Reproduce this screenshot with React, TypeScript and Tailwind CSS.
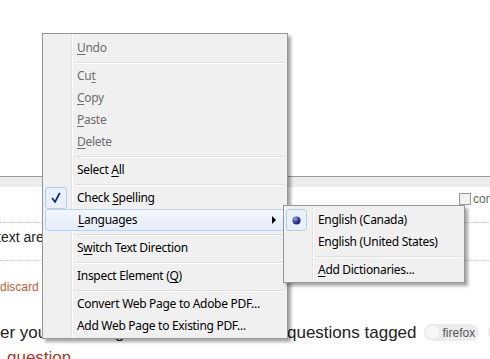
import React from "react";

type Entry =
  | { sep: true }
  | {
      sep?: false;
      label: React.ReactNode;
      disabled?: boolean;
      checked?: boolean;
      radio?: boolean;
      active?: boolean;
      arrow?: boolean;
    };

function U({ children }: { children: React.ReactNode }) {
  return <span className="underline underline-offset-[2px]">{children}</span>;
}

const mainItems: Entry[] = [
  { label: <><U>U</U>ndo</>, disabled: true },
  { sep: true },
  { label: <>Cu<U>t</U></>, disabled: true },
  { label: <><U>C</U>opy</>, disabled: true },
  { label: <><U>P</U>aste</>, disabled: true },
  { label: <><U>D</U>elete</>, disabled: true },
  { sep: true },
  { label: <>Select <U>A</U>ll</> },
  { sep: true },
  { label: <>Check <U>S</U>pelling</>, checked: true },
  { label: <><U>L</U>anguages</>, active: true, arrow: true },
  { sep: true },
  { label: <>S<U>w</U>itch Text Direction</> },
  { sep: true },
  { label: <>Inspect Element (<U>Q</U>)</> },
  { sep: true },
  { label: <>Convert Web Page to Adobe PDF...</> },
  { label: <>Add Web Page to Existing PDF...</> },
];

const subItems: Entry[] = [
  { label: <>English (Canada)</>, radio: true },
  { label: <>English (United States)</> },
  { sep: true },
  { label: <><U>A</U>dd Dictionaries...</> },
];

function CheckBox() {
  return (
    <div className="absolute left-0 top-0 h-[22px] w-[22px] rounded-[3px] border border-[#b4cdea] bg-[#e8f0fa]">
      <svg width="20" height="20" viewBox="0 0 20 20">
        <path d="M6.5 10.5 L9 14 L13.5 5.5" fill="none" stroke="#17297a" strokeWidth="1.7" strokeLinecap="round" strokeLinejoin="round" />
      </svg>
    </div>
  );
}

function RadioBox() {
  return (
    <div className="absolute left-0 top-0 flex h-[22px] w-[21px] items-center justify-center rounded-[3px] border border-[#b4cdea] bg-[#e8f0fa]">
      <svg width="9" height="9" viewBox="0 0 9 9">
        <defs>
          <radialGradient id="dot" cx="35%" cy="30%" r="70%">
            <stop offset="0%" stopColor="#9aa4e6" />
            <stop offset="55%" stopColor="#3a45a0" />
            <stop offset="100%" stopColor="#1c2366" />
          </radialGradient>
        </defs>
        <circle cx="4.5" cy="4.5" r="4" fill="url(#dot)" />
      </svg>
    </div>
  );
}

function Menu({ items, className }: { items: Entry[]; className: string }) {
  return (
    <div
      className={`absolute border border-[#979797] bg-[#f0f0f0] px-[2px] pt-[3px] pb-[1px] text-[12px] tracking-[-0.3px] shadow-[3px_3px_3px_rgba(0,0,0,0.35)] ${className}`}
      style={{ fontFamily: '"Noto Sans", "Open Sans", sans-serif' }}
    >
      <div className="absolute top-0 bottom-0 left-[28px] w-[2px] border-l border-[#e2e3e3] bg-white" />
      {items.map((it, i) =>
        it.sep ? (
          <div key={i} className="relative h-[6px] pl-[30px] pt-[3px]">
            <div className="h-[2px] border-t border-b border-t-[#e0e0e0] border-b-white" />
          </div>
        ) : (
          <div
            key={i}
            className={`relative flex h-[22px] items-center pl-[32px] leading-none ${
              it.disabled ? "text-[#6d6d6d]" : "text-[#000]"
            } ${it.active ? "rounded-[3px] border border-[#b8d3f3] bg-linear-to-b from-[#f3f7fd] to-[#e4edfa] pl-[31px]" : ""}`}
          >
            {it.checked && <CheckBox />}
            {it.radio && <RadioBox />}
            <span className="whitespace-nowrap">{it.label}</span>
            {it.arrow && (
              <svg className="absolute right-[8px] top-[6px]" width="4" height="8" viewBox="0 0 4 8">
                <path d="M0 0 L4 4 L0 8 Z" fill="#000" />
              </svg>
            )}
          </div>
        )
      )}
    </div>
  );
}

export default function App() {
  return (
    <div
      className="relative h-[359px] w-[490px] overflow-hidden bg-white text-[#222]"
      style={{ fontFamily: '"Liberation Sans", Arial, sans-serif' }}
    >
      {/* page behind the menu */}
      <div className="h-[176px]" />
      <div className="h-[11px] border-t border-[#9a9a9a] bg-[#ececec]" />
      <div className="flex h-[35px] items-start whitespace-nowrap pl-[459px] pt-[6px] text-[12px] leading-[13px] text-[#666]">
        <span className="mr-[2px] h-[12px] w-[12px] shrink-0 border border-[#9a9a9a] bg-[#f2f2f2]" />
        community wiki
      </div>
      <div className="h-[38px] border-t border-dotted border-[#c4c4c4] pt-[5px] text-[14px] leading-[18px] text-[#222]">
        <span className="-ml-[3px] whitespace-nowrap">text area</span>
      </div>
      <div className="h-[61px] border-t border-dotted border-[#c4c4c4] pt-[18px] text-[12px] leading-[16px] text-[#cc5a35]">
        discard
      </div>
      <div className="flex h-[23px] items-center whitespace-nowrap text-[17px] leading-[20px] text-[#222]">
        <div className="w-[287px] shrink-0 overflow-hidden">er you're looking for? Browse other</div>
        <span className="shrink-0">questions tagged</span>
        <span className="ml-[7px] flex h-[17px] shrink-0 items-center rounded-full bg-[#ececec] pl-[2px] pr-[4px] text-[12px] text-[#555]">
          <span className="mr-[4px] h-[13px] w-[13px] rounded-full bg-[#f7f7f7]" />
          firefox
        </span>
        <span className="ml-[9px] h-[17px] w-[40px] shrink-0 rounded-full bg-[#ececec]" />
      </div>
      <div className="whitespace-nowrap pl-[7px] pt-[4px] text-[17px] leading-[20px] text-[#a8361c]">question.</div>

      {/* context menu */}
      <Menu items={mainItems} className="left-[42px] top-[33px] w-[246px]" />
      <Menu items={subItems} className="left-[283px] top-[205px] w-[182px]" />
    </div>
  );
}
